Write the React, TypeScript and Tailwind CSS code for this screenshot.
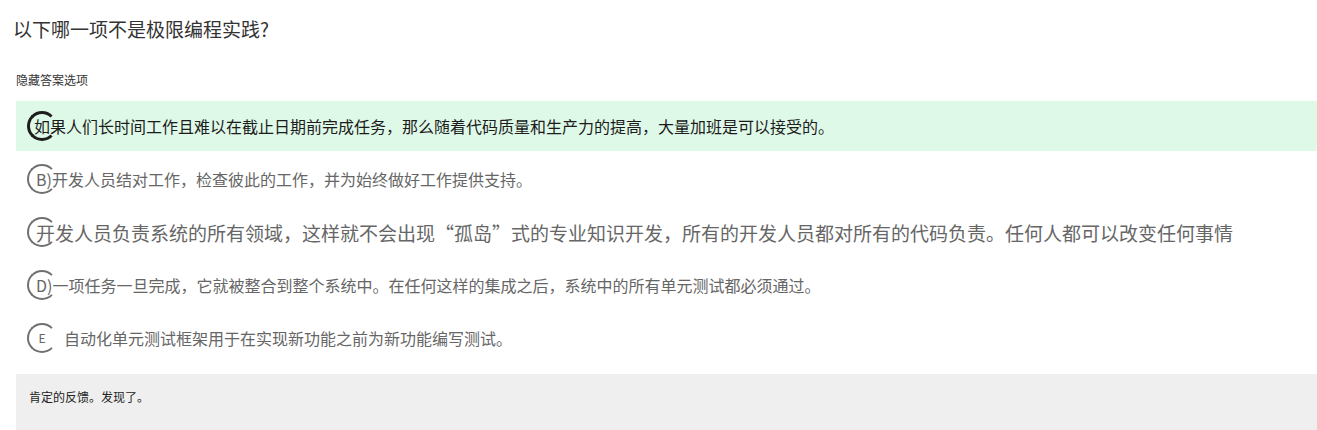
import React from 'react';

const font = { fontFamily: '"Noto Sans CJK SC", "Noto Sans", sans-serif' };

type Option = {
  label?: string;
  text: string;
  selected?: boolean;
  big?: boolean;
  spaced?: boolean;
};

const options: Option[] = [
  {
    text: '如果人们长时间工作且难以在截止日期前完成任务，那么随着代码质量和生产力的提高，大量加班是可以接受的。',
    selected: true,
  },
  { label: 'B)', text: '开发人员结对工作，检查彼此的工作，并为始终做好工作提供支持。' },
  {
    text: '开发人员负责系统的所有领域，这样就不会出现“孤岛”式的专业知识开发，所有的开发人员都对所有的代码负责。任何人都可以改变任何事情',
    big: true,
  },
  {
    label: 'D)',
    text: '一项任务一旦完成，它就被整合到整个系统中。在任何这样的集成之后，系统中的所有单元测试都必须通过。',
  },
  { label: 'E', text: '自动化单元测试框架用于在实现新功能之前为新功能编写测试。', spaced: true },
];

function OptionRow({ opt }: { opt: Option }) {
  return (
    <div
      className={`relative flex h-[50px] items-center ${
        opt.selected ? 'bg-[#dff9e8] pl-[18px] text-[#1c1c1c]' : 'pl-[20px] text-[#666666]'
      }`}
    >
      <span
        className={`absolute left-[11px] top-1/2 h-[30px] w-[30px] -translate-y-1/2 rounded-full border-r-transparent ${
          opt.selected ? 'border-[3px] border-[#1e1e1e]' : 'border-2 border-[#707070]'
        }`}
      />
      {opt.spaced ? (
        <>
          <span className="relative ml-[-9px] w-[30px] text-center text-[12px] leading-none">{opt.label}</span>
          <span className="relative ml-[7px] text-[16px] leading-none">{opt.text}</span>
        </>
      ) : (
        <span className={`relative leading-none ${opt.big ? 'text-[19px]' : 'text-[16px]'}`}>
          {opt.label}
          {opt.text}
        </span>
      )}
    </div>
  );
}

export default function App() {
  return (
    <div className="min-h-[430px] w-full overflow-hidden bg-white" style={font}>
      <h1 className="pl-[13px] pt-[17px] text-[19px] leading-[24px] text-[#333333]">
        以下哪一项不是极限编程实践?
      </h1>
      <div className="mt-[31px] pl-[16px] text-[12px] leading-[16px] text-[#333333]">隐藏答案选项</div>
      <div className="ml-[16px] mt-[13px] flex flex-col gap-[3px]">
        {options.map((opt, i) => (
          <OptionRow key={i} opt={opt} />
        ))}
      </div>
      <div className="ml-[16px] mt-[11px] h-[60px] bg-[#efefef] pl-[13px] pt-[15px] text-[12px] leading-[16px] text-[#222]">
        肯定的反馈。发现了。
      </div>
    </div>
  );
}
